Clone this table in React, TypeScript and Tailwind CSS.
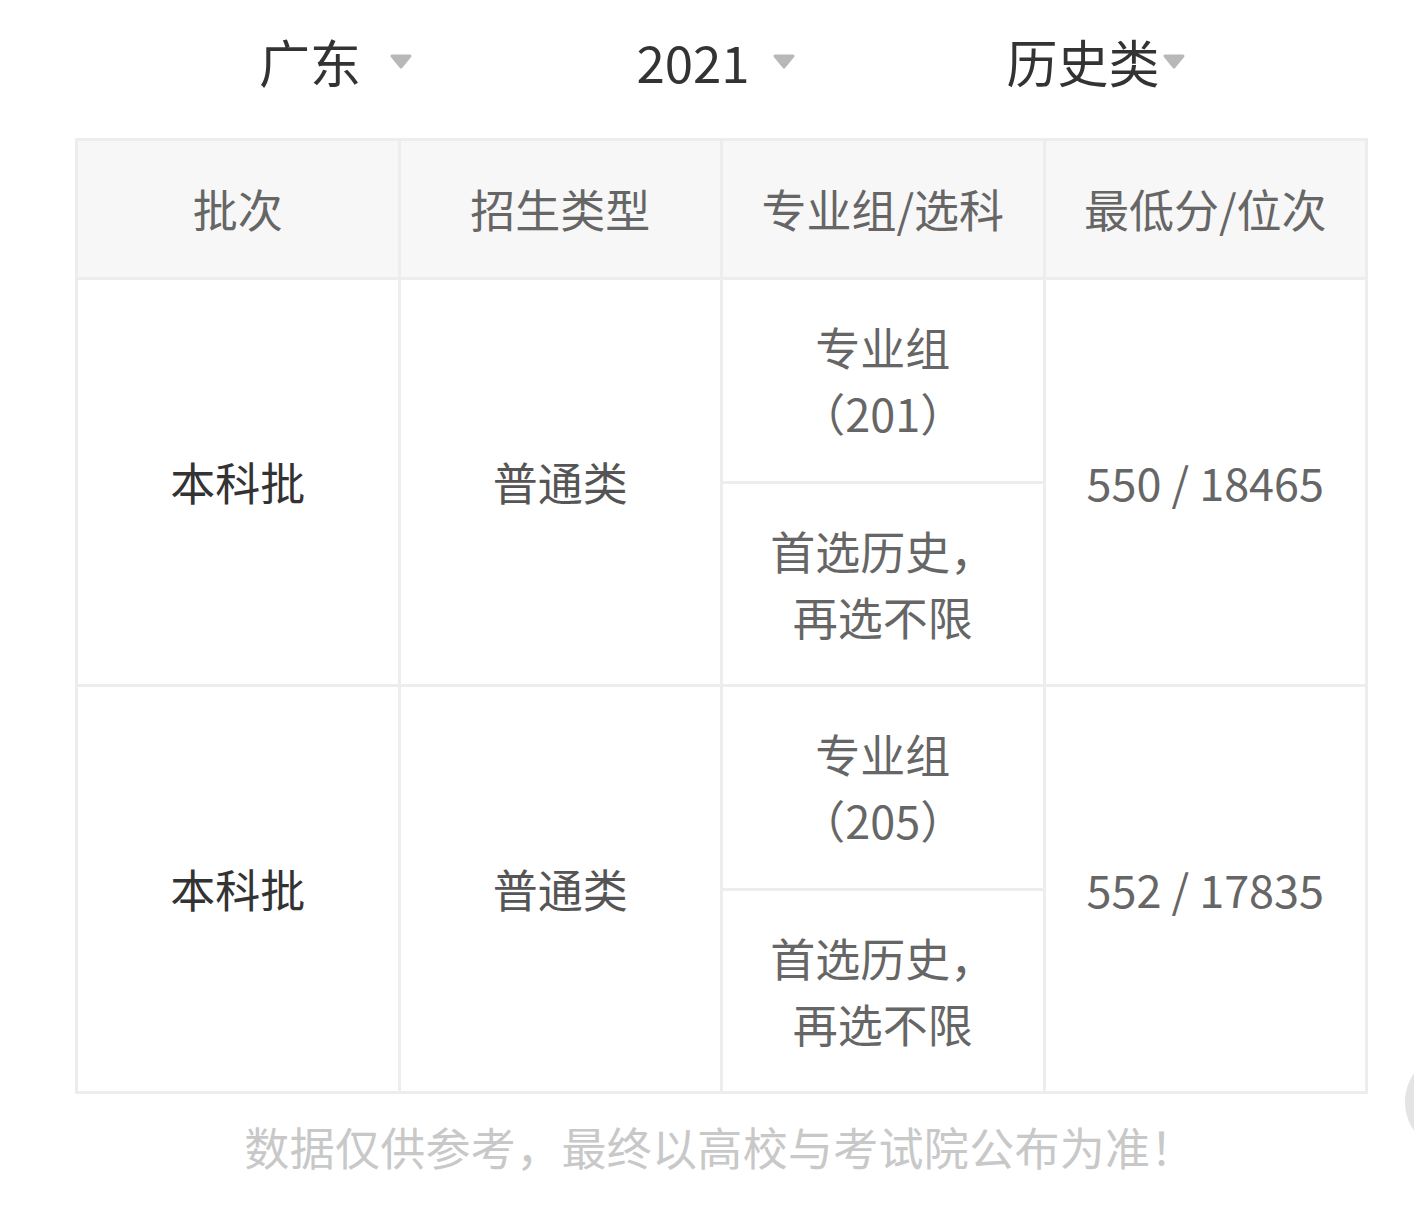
const font = "font-['Noto_Sans_CJK_SC','Noto_Sans',sans-serif]";

type Row = {
  batch: string;
  type: string;
  group: string;
  score: string;
};

const rows: Row[] = [
  { batch: "本科批", type: "普通类", group: "（201）", score: "550 / 18465" },
  { batch: "本科批", type: "普通类", group: "（205）", score: "552 / 17835" },
];

function Caret() {
  return (
    <svg width="24" height="17" viewBox="0 0 24 17" className="shrink-0">
      <polygon
        points="3,3 21,3 12,14"
        fill="#b8b8b8"
        stroke="#b8b8b8"
        strokeWidth="3"
        strokeLinejoin="round"
      />
    </svg>
  );
}

function Selector({ label, gap }: { label: string; gap: string }) {
  return (
    <div className={`flex items-center justify-center ${gap}`}>
      <span className="text-[51px] leading-none text-[#333]">{label}</span>
      <Caret />
    </div>
  );
}

export default function App() {
  return (
    <div className={`relative w-[1414px] h-[1224px] overflow-hidden bg-white ${font}`}>
      {/* filter row */}
      <div className="grid grid-cols-3 w-[1140px] ml-[146px] h-[138px] pb-[16px]">
        <Selector label="广东" gap="gap-[28px]" />
        <Selector label="2021" gap="gap-[22px]" />
        <Selector label="历史类" gap="gap-[2px]" />
      </div>

      {/* table */}
      <div className="ml-[75px] w-[1293px] bg-[#ededed] p-[3px] flex flex-col gap-[3px] text-[45px] leading-[66px]">
        <div className="grid grid-cols-4 gap-[3px] h-[136px] text-[#666]">
          {["批次", "招生类型", "专业组/选科", "最低分/位次"].map((h) => (
            <div key={h} className="bg-[#f7f7f7] flex items-center justify-center">
              {h}
            </div>
          ))}
        </div>

        {rows.map((r, i) => (
          <div key={i} className="grid grid-cols-4 gap-[3px] h-[404px]">
            <div className="bg-white flex items-center justify-center text-[#333]">{r.batch}</div>
            <div className="bg-white flex items-center justify-center text-[#555]">{r.type}</div>
            <div className="flex flex-col gap-[3px] text-[#666]">
              <div className="flex-1 bg-white flex flex-col items-center justify-center text-center">
                <span>专业组</span>
                <span>{r.group}</span>
              </div>
              <div className="flex-1 bg-white flex flex-col items-center justify-center text-center">
                <span>首选历史，</span>
                <span>再选不限</span>
              </div>
            </div>
            <div className="bg-white flex items-center justify-center text-[#666]">{r.score}</div>
          </div>
        ))}
      </div>

      {/* note */}
      <p className="mt-[20px] pl-[26px] text-center text-[45px] leading-[66px] tracking-[0.3px] text-[#c8c8c8]">
        数据仅供参考，最终以高校与考试院公布为准！
      </p>

      {/* floating button peeking from the edge */}
      <div className="absolute left-[1405px] top-[1052px] w-[100px] h-[100px] rounded-full bg-[#e4e4e4]" />
    </div>
  );
}
